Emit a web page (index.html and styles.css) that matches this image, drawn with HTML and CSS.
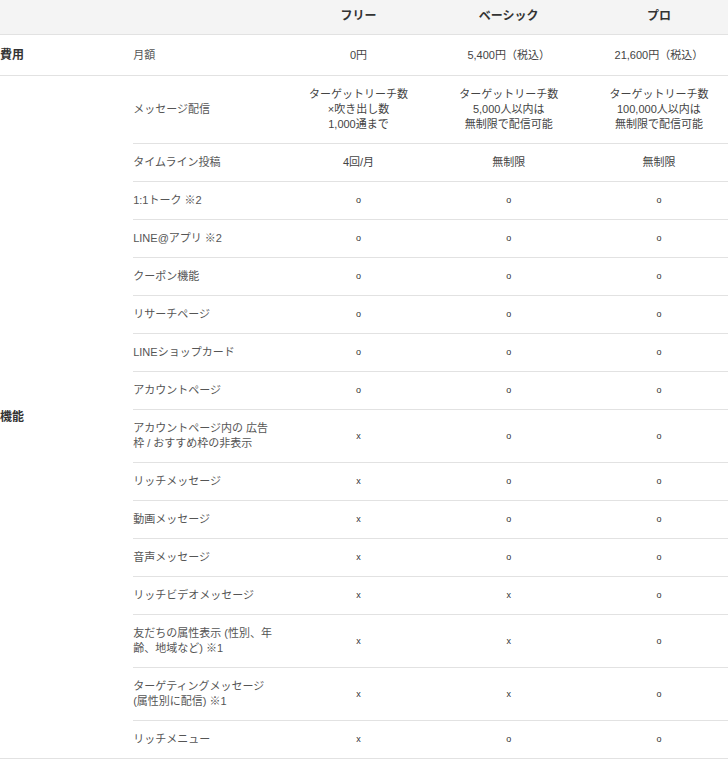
FILE: index.html
```html
<!DOCTYPE html>
<html lang="ja">
<head>
<meta charset="utf-8">
<title>料金プラン比較</title>
<link rel="stylesheet" href="styles.css">
</head>
<body>
<div class="wrap">
<table class="plans">
  <colgroup>
    <col class="c-cat"><col class="c-feat"><col class="c-val"><col class="c-val"><col class="c-val">
  </colgroup>
  <thead>
    <tr class="head">
      <th></th><th></th><th>フリー</th><th>ベーシック</th><th>プロ</th>
    </tr>
  </thead>
  <tbody>
    <tr class="cost">
      <th class="cat">費用</th>
      <td class="feat">月額</td>
      <td class="val">0円</td>
      <td class="val">5,400円（税込）</td>
      <td class="val">21,600円（税込）</td>
    </tr>
    <tr>
      <th class="cat" rowspan="18">機能</th>
      <td class="feat">メッセージ配信</td>
      <td class="val">ターゲットリーチ数<br>×吹き出し数<br>1,000通まで</td>
      <td class="val">ターゲットリーチ数<br>5,000人以内は<br>無制限で配信可能</td>
      <td class="val">ターゲットリーチ数<br>100,000人以内は<br>無制限で配信可能</td>
    </tr>
    <tr><td class="feat">タイムライン投稿</td><td class="val">4回/月</td><td class="val">無制限</td><td class="val">無制限</td></tr>
    <tr><td class="feat">1:1トーク ※2</td><td class="val"><span class="mk">o</span></td><td class="val"><span class="mk">o</span></td><td class="val"><span class="mk">o</span></td></tr>
    <tr><td class="feat">LINE@アプリ ※2</td><td class="val"><span class="mk">o</span></td><td class="val"><span class="mk">o</span></td><td class="val"><span class="mk">o</span></td></tr>
    <tr><td class="feat">クーポン機能</td><td class="val"><span class="mk">o</span></td><td class="val"><span class="mk">o</span></td><td class="val"><span class="mk">o</span></td></tr>
    <tr><td class="feat">リサーチページ</td><td class="val"><span class="mk">o</span></td><td class="val"><span class="mk">o</span></td><td class="val"><span class="mk">o</span></td></tr>
    <tr><td class="feat">LINEショップカード</td><td class="val"><span class="mk">o</span></td><td class="val"><span class="mk">o</span></td><td class="val"><span class="mk">o</span></td></tr>
    <tr><td class="feat">アカウントページ</td><td class="val"><span class="mk">o</span></td><td class="val"><span class="mk">o</span></td><td class="val"><span class="mk">o</span></td></tr>
    <tr><td class="feat">アカウントページ内の 広告<br>枠 / おすすめ枠の非表示</td><td class="val"><span class="mk">x</span></td><td class="val"><span class="mk">o</span></td><td class="val"><span class="mk">o</span></td></tr>
    <tr><td class="feat">リッチメッセージ</td><td class="val"><span class="mk">x</span></td><td class="val"><span class="mk">o</span></td><td class="val"><span class="mk">o</span></td></tr>
    <tr><td class="feat">動画メッセージ</td><td class="val"><span class="mk">x</span></td><td class="val"><span class="mk">o</span></td><td class="val"><span class="mk">o</span></td></tr>
    <tr><td class="feat">音声メッセージ</td><td class="val"><span class="mk">x</span></td><td class="val"><span class="mk">o</span></td><td class="val"><span class="mk">o</span></td></tr>
    <tr><td class="feat">リッチビデオメッセージ</td><td class="val"><span class="mk">x</span></td><td class="val"><span class="mk">x</span></td><td class="val"><span class="mk">o</span></td></tr>
    <tr><td class="feat">友だちの属性表示 (性別、年<br>齢、地域など) ※1</td><td class="val"><span class="mk">x</span></td><td class="val"><span class="mk">x</span></td><td class="val"><span class="mk">o</span></td></tr>
    <tr><td class="feat">ターゲティングメッセージ<br>(属性別に配信) ※1</td><td class="val"><span class="mk">x</span></td><td class="val"><span class="mk">x</span></td><td class="val"><span class="mk">o</span></td></tr>
    <tr><td class="feat">リッチメニュー</td><td class="val"><span class="mk">x</span></td><td class="val"><span class="mk">o</span></td><td class="val"><span class="mk">o</span></td></tr>
  </tbody>
</table>
</div>
</body>
</html>
```

FILE: styles.css
```css
html, body {
  margin: 0;
  padding: 0;
  background: #fff;
}
body {
  overflow: hidden;
  font-family: "Liberation Sans", "Noto Sans CJK JP", Arial, sans-serif;
  color: #444;
}
.wrap {
  width: 728px;
  overflow: hidden;
}
.plans {
  width: 734px;
  border-collapse: collapse;
  table-layout: fixed;
}
.c-cat { width: 133px; }
.c-feat { width: 150px; }
.c-val { width: 150px; }

.head th {
  background: #f4f4f4;
  font-size: 12px;
  font-weight: bold;
  color: #333;
  line-height: 15px;
  height: 15px;
  padding: 9px 0 10px;
  text-align: center;
  border-bottom: 1px solid #e2e2e2;
}
.plans td, .plans tbody th {
  padding: 11px 0;
  font-size: 11px;
  line-height: 15px;
  border-bottom: 1px solid #e2e2e2;
  vertical-align: middle;
}
.plans tbody th.cat {
  text-align: left;
  font-size: 12px;
  line-height: 18px;
  font-weight: bold;
  color: #333;
}
.feat {
  text-align: left;
  color: #555;
  white-space: nowrap;
}
.val {
  text-align: center;
  color: #444;
  white-space: nowrap;
}
.mk {
  display: inline-block;
  vertical-align: top;
  height: 15px;
  font-size: 9px;
  line-height: 15px;
  color: #333;
}
```
